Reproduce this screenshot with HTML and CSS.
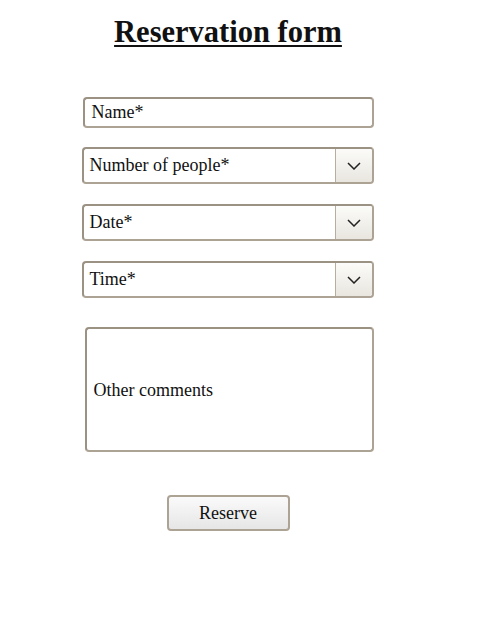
FILE: index.html
```html
<!DOCTYPE html>
<html>
<head>
<meta charset="utf-8">
<link rel="stylesheet" href="styles.css">
</head>
<body>
<div class="page">
  <h1 class="title">Reservation form</h1>
  <form class="form">
    <div class="field text-field"><span>Name*</span></div>
    <div class="field select"><span class="label">Number of people*</span><span class="arrow"><svg width="14" height="8" viewBox="0 0 14 8"><path d="M1 1 L7 7 L13 1" fill="none" stroke="#222" stroke-width="1.5"/></svg></span></div>
    <div class="field select"><span class="label">Date*</span><span class="arrow"><svg width="14" height="8" viewBox="0 0 14 8"><path d="M1 1 L7 7 L13 1" fill="none" stroke="#222" stroke-width="1.5"/></svg></span></div>
    <div class="field select"><span class="label">Time*</span><span class="arrow"><svg width="14" height="8" viewBox="0 0 14 8"><path d="M1 1 L7 7 L13 1" fill="none" stroke="#222" stroke-width="1.5"/></svg></span></div>
    <div class="field comments"><span>Other comments</span></div>
    <div class="button-row"><button type="button" class="reserve">Reserve</button></div>
  </form>
</div>
</body>
</html>
```

FILE: styles.css
```css
body {
  margin: 8px;
  font-family: "Liberation Serif", "Times New Roman", serif;
  color: #111;
  background: #fff;
}
.page {
  width: 440px;
  display: flex;
  flex-direction: column;
  align-items: center;
}
.title {
  font-size: 30.5px;
  font-weight: bold;
  text-decoration: underline;
  text-decoration-thickness: 2px;
  text-underline-offset: 3px;
  margin: 7px 0 0 0;
  line-height: 34px;
}
.form {
  display: flex;
  flex-direction: column;
  align-items: center;
  margin-top: 48px;
}
.field {
  box-sizing: border-box;
  border: 2px solid #ada394;
  border-top-color: #9c9284;
  border-left-color: #9c9284;
  border-radius: 4px;
  background: #fff;
  font-size: 18px;
  display: flex;
  align-items: center;
}
.text-field {
  width: 291px;
  height: 31px;
  padding-left: 7px;
}
.select {
  width: 292px;
  height: 37px;
  margin-top: 19px;
  margin-left: -1px;
}
.select + .select {
  margin-top: 20px;
}
.select .label {
  flex: 1;
  padding-left: 6px;
}
.arrow {
  width: 36px;
  height: 100%;
  border-left: 1px solid #b7ae9f;
  background: linear-gradient(#fbfbf9, #e9e6df);
  border-radius: 0 2px 2px 0;
  display: flex;
  align-items: center;
  justify-content: center;
}
.comments {
  width: 289px;
  height: 125px;
  margin-top: 29px;
  margin-left: 2px;
  padding-left: 7px;
  padding-top: 1px;
}
.button-row {
  margin-top: 43px;
}
.reserve {
  width: 123px;
  height: 36px;
  font-family: "Liberation Serif", "Times New Roman", serif;
  font-size: 18px;
  color: #111;
  border: 2px solid #ada394;
  border-radius: 4px;
  background: linear-gradient(#fafafa, #e6e6e6);
}
```
